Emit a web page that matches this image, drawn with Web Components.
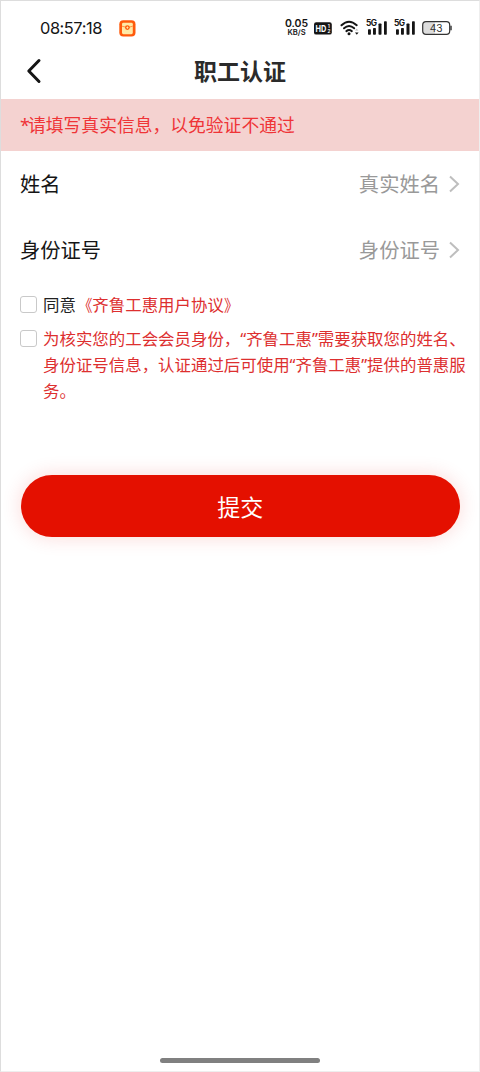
<!DOCTYPE html>
<html lang="zh-CN">
<head>
<meta charset="utf-8">
<title>职工认证</title>
<style>
html,body{margin:0;height:100%;background:#fff}
body{font-family:"Noto Sans","Noto Sans CJK SC",sans-serif;color:#151515}
</style>
</head>
<body>
<auth-page></auth-page>
<script>
const define = (name, html) => customElements.define(name, class extends HTMLElement {
  constructor() {
    super();
    this.attachShadow({ mode: 'open' }).innerHTML = html;
  }
});

define('signal-bars', `
<style>:host{display:block;width:22px;height:16px}svg{display:block;overflow:visible}</style>
<svg width="22" height="16" viewBox="0 0 22 16">
  <g fill="#151515"><rect x="2" y="9.3" width="2.9" height="5.5" rx=".7"/><rect x="7" y="8" width="2.9" height="6.8" rx=".7"/><rect x="12.5" y="3.5" width="3" height="11.3" rx=".7"/><rect x="18" y="1.2" width="2.8" height="13.6" rx=".7"/></g>
  <text x="0" y="6.4" font-family="Inter" font-size="8.4" font-weight="700" letter-spacing="-.5" fill="#151515">5G</text>
</svg>`);

define('phone-status', `
<style>
:host{display:flex;height:54px;box-sizing:border-box;padding:0 27px 0 39px;align-items:center;font-family:Inter,sans-serif;color:#151515}
time{font-size:16.4px;letter-spacing:-.45px;width:64px;white-space:nowrap}
svg{display:block;flex:none}
.app{margin-left:15px}
.rate{margin-left:auto;width:24px;font-size:7.6px;line-height:8px;text-align:center;font-weight:600;white-space:nowrap}
.rate b{display:block;font-size:10.5px;line-height:10px;font-weight:600}
.hd{margin-left:5px}.wifi{margin-left:8px}
.s1{margin-left:6px}.s2{margin-left:6px}
.bat{margin-left:6.5px}
</style>
<time>08:57:18</time>
<svg class="app" width="17" height="17" viewBox="0 0 17 17"><rect x=".3" y=".3" width="16.2" height="16.2" rx="4" fill="#ff5a0b"/><rect x="3" y="2.8" width="10.8" height="11.4" rx="1.4" fill="#ffe9a6"/><path d="M3 6.2Q8.4 9 13.8 6.2" fill="none" stroke="#ff8a3c" stroke-width=".9"/><circle cx="8.4" cy="7.6" r="2.4" fill="#ff5a0b"/><path d="M8.4 6.2 9.6 7.6 8.4 9 7.2 7.6Z" fill="#ffe9a6"/></svg>
<div class="rate"><b>0.05</b>KB/S</div>
<svg class="hd" width="18" height="13" viewBox="0 0 18 13"><rect y=".3" width="17.8" height="12.3" rx="2.2" fill="#151515"/><text x="1.4" y="10" textLength="10.8" lengthAdjust="spacingAndGlyphs" font-family="Inter" font-size="9.6" font-weight="700" fill="#fff">HD</text><text x="13.8" y="5.7" font-family="Inter" font-size="4.6" font-weight="700" fill="#fff">1</text><text x="13.4" y="11.4" font-family="Inter" font-size="4.6" font-weight="700" fill="#fff">2</text></svg>
<svg class="wifi" width="20" height="16" viewBox="0 0 20 16"><g fill="none" stroke="#151515" stroke-width="2" stroke-linecap="round"><path d="M1.5 5.2Q9 -1.8 16.7 5.2"/><path d="M4 8.3Q9 3.8 14.2 8.3"/><path d="M6.4 11.1Q9 9 11.8 11.1"/></g><circle cx="9" cy="13.7" r="1.5" fill="#151515"/><path d="M15 10.6 16.7 8.7 18.4 10.6Z" fill="#bbb"/><path d="M15 12.4H18.6L16.8 14.7Z" fill="#151515"/></svg>
<signal-bars class="s1"></signal-bars><signal-bars class="s2"></signal-bars>
<svg class="bat" width="30" height="14" viewBox="0 0 30 14"><path d="M4 1.2H13V12.8H4Q1 12.8 1 10V4Q1 1.2 4 1.2Z" fill="#ddd"/><rect x=".7" y=".7" width="27" height="12.6" rx="3.3" fill="none" stroke="#333" stroke-width="1.2"/><path d="M29 4.8V9.2" stroke="#444" stroke-width="1.6"/><text x="14.2" y="10.8" text-anchor="middle" font-family="Inter" font-size="10.2" fill="#333">43</text></svg>`);

define('nav-header', `
<style>
:host{display:grid;grid-template-columns:60px 1fr 60px;height:44px;box-sizing:border-box;padding-bottom:12px;align-items:center}
svg{display:block;margin-left:25px}
h1{margin:0;text-align:center;font-size:23px;line-height:32px;font-weight:700;color:#2b2b2b;white-space:nowrap}
</style>
<svg width="16" height="26" viewBox="0 0 16 26"><path d="M13 2.5 2.8 13 13 23.5" fill="none" stroke="#151515" stroke-width="3" stroke-linecap="round" stroke-linejoin="round"/></svg>
<h1><slot></slot></h1>`);

define('notice-bar', `
<style>:host{display:flex;align-items:center;box-sizing:border-box;height:51.5px;padding:1px 19px 0 19px;background:#f4d2d0;color:#ef3437;font-size:17.8px;line-height:26px;white-space:nowrap}
::slotted(b){font-weight:400;letter-spacing:-1.8px}</style>
<span><slot></slot></span>`);

define('form-row', `
<style>
:host{display:flex;align-items:center;height:66px;padding:0 19px;font-size:20.3px;line-height:30px}
.value{margin-left:auto;color:#999}
svg{display:block;margin-left:8px}
</style>
<span><slot></slot></span><span class="value"><slot name="value"></slot></span>
<svg width="12" height="18" viewBox="0 0 12 18"><path d="M2 1.5 10 9 2 16.5" fill="none" stroke="#bebebe" stroke-width="2"/></svg>`);

define('check-line', `
<style>
:host{display:flex;font-size:16.45px;line-height:26px;white-space:nowrap}
i{flex:none;box-sizing:border-box;width:17px;height:17px;margin:4px 6px 0 0;border:1.3px solid #c9c9c9;border-radius:3px;background:#fff}
div{color:#dd2f2f}
::slotted(b){font-weight:400;color:#222}
::slotted(.open),::slotted(.close){display:inline-block;transform:scaleX(.88);transform-origin:95% 50%}
::slotted(.close){transform-origin:5% 50%}
</style>
<i></i><div><slot></slot></div>`);

define('submit-button', `
<style>
:host{display:block}
button{display:block;width:100%;height:61.5px;padding:0;border:0;border-radius:31px;background:#e41000;color:#fff;font:400 23px/32px "Noto Sans CJK SC",sans-serif;box-shadow:0 0 20px rgba(228,16,0,.16)}
</style>
<button><slot></slot></button>`);

define('auth-page', `
<style>
:host{display:flex;flex-direction:column;box-sizing:border-box;width:480px;height:1072px;border:1px solid #ddd;border-right-color:#eee;border-bottom-color:#eee;background:#fff;overflow:hidden}
.agree{display:flex;flex-direction:column;gap:8px;padding:9.5px 0 0 19px}
submit-button{margin:71px 19px 0 19.5px}
footer{margin-top:auto;padding-bottom:8px;display:flex;justify-content:center}
footer span{width:160px;height:5.5px;border-radius:3px;background:#808080}
</style>
<phone-status></phone-status>
<nav-header>职工认证</nav-header>
<notice-bar><b>*</b>请填写真实信息，以免验证不通过</notice-bar>
<form-row>姓名<span slot="value">真实姓名</span></form-row>
<form-row>身份证号<span slot="value">身份证号</span></form-row>
<div class="agree">
<check-line><b>同意</b><span class="open">《</span>齐鲁工惠用户协议<span class="close">》</span></check-line>
<check-line>为核实您的工会会员身份，“齐鲁工惠”需要获取您的姓名、<br>身份证号信息，认证通过后可使用“齐鲁工惠”提供的普惠服<br>务。</check-line>
</div>
<submit-button>提交</submit-button>
<footer><span></span></footer>`);
</script>
</body>
</html>
